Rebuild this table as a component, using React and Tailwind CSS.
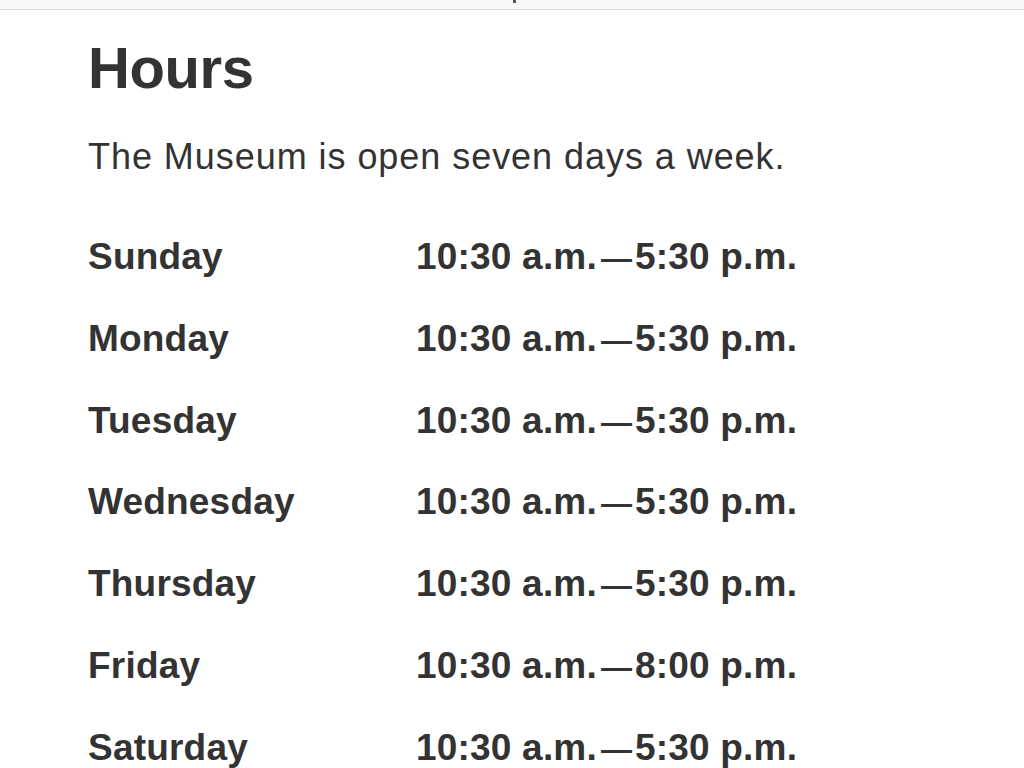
export default function App() {
  const rows = [
    ["Sunday", "10:30 a.m.", "5:30 p.m."],
    ["Monday", "10:30 a.m.", "5:30 p.m."],
    ["Tuesday", "10:30 a.m.", "5:30 p.m."],
    ["Wednesday", "10:30 a.m.", "5:30 p.m."],
    ["Thursday", "10:30 a.m.", "5:30 p.m."],
    ["Friday", "10:30 a.m.", "8:00 p.m."],
    ["Saturday", "10:30 a.m.", "5:30 p.m."],
  ];
  return (
    <div className="w-[1024px] h-[768px] overflow-hidden bg-white text-[#333333] font-['Liberation_Sans',Arial,sans-serif]">
      <div className="h-[10px] bg-[#f7f7f7] border-b border-[#dcdcdc] flex justify-center">
        <div className="w-[3px] h-[3px] bg-[#555] ml-[5px]"></div>
      </div>
      <div className="pl-[88px]">
        <h1 className="mt-[29px] text-[58px] leading-[58px] font-bold tracking-[-0.4px]">Hours</h1>
        <p className="mt-[42px] text-[36px] leading-[36px] tracking-[0.95px]">The Museum is open seven days a week.</p>
        <div className="mt-[41px] flex flex-col">
          {rows.map(([d, a, b]) => (
            <div key={d} className="flex h-[81.8px] leading-[81.8px] text-[37px] font-bold tracking-[0.2px]">
              <div className="w-[328px]">{d}</div>
              <div className="flex items-baseline">
                <span>{a}</span>
                <span className="text-[31px] ml-[4px] mr-[3px] tracking-normal">—</span>
                <span>{b}</span>
              </div>
            </div>
          ))}
        </div>
      </div>
    </div>
  );
}
